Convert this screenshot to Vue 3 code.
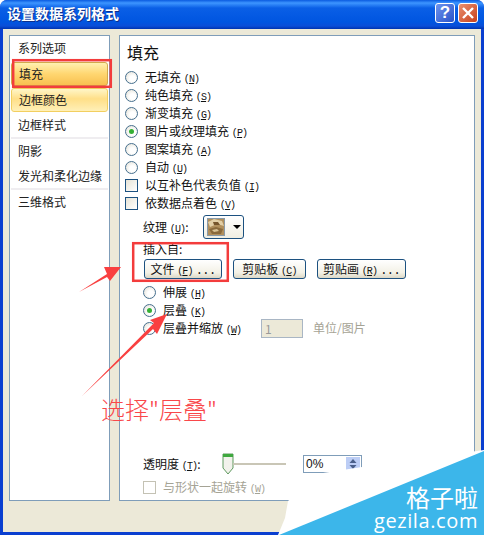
<template>
	<div class="win">
		<div class="titlebar">
			<span class="title">设置数据系列格式</span>
			<div class="capbtn help">?</div>
			<div class="capbtn close">
				<svg width="14" height="14" viewBox="0 0 14 14">
					<path d="M2 2 L12 12 M12 2 L2 12" stroke="#fff" stroke-width="2.4" />
				</svg>
			</div>
		</div>

		<div class="client">
			<div class="side">
				<template v-for="item in sideItems" :key="item.text">
					<div v-if="item.sep" class="sep"></div>
					<div class="side-item" :class="item.state">{{ item.text }}</div>
				</template>
			</div>

			<div class="main">
				<h2 class="heading">填充</h2>

				<div v-for="r in fillRadios" :key="r.text" class="row">
					<span class="radio" :class="{ on: r.on }"></span>
					<span class="label">{{ r.text }} <span class="key">(<u>{{ r.key }}</u>)</span></span>
				</div>
				<div v-for="c in checks" :key="c.text" class="row">
					<span class="check"></span>
					<span class="label">{{ c.text }} <span class="key">(<u>{{ c.key }}</u>)</span></span>
				</div>

				<div class="sub">
					<div class="texture-row">
						<span class="label tex-label">纹理 <span class="key">(<u>U</u>)</span>:</span>
						<div class="texture-pick">
							<svg width="18" height="18" viewBox="0 0 18 18">
								<rect width="18" height="18" fill="#b08f5c" />
								<path d="M1 4 L7 1 L15 3 L17 8 L10 6 L3 9Z" fill="#e2cfa6" />
								<path d="M2 11 L9 9 L16 11 L14 16 L5 16Z" fill="#8a6a3c" />
								<path d="M6 4 L11 4 L13 7 L7 7Z" fill="#75552c" />
								<path d="M5 12 L10 11 L12 13 L7 14Z" fill="#d8c294" />
								<rect x="0.5" y="0.5" width="17" height="17" fill="none" stroke="#8a9aa8" />
							</svg>
							<span class="caret"></span>
						</div>
					</div>
					<div class="insert-label">插入自:</div>
					<div class="btns">
						<button class="btn b1">文件 <span class="key">(<u>F</u>)</span><span class="dots">...</span></button>
						<button class="btn b2">剪贴板 <span class="key">(<u>C</u>)</span></button>
						<button class="btn b3">剪贴画 <span class="key">(<u>R</u>)</span><span class="dots">...</span></button>
					</div>
					<div class="tile-opts">
						<div class="row">
							<span class="radio"></span>
							<span class="label">伸展 <span class="key">(<u>H</u>)</span></span>
						</div>
						<div class="row">
							<span class="radio on"></span>
							<span class="label">层叠 <span class="key">(<u>K</u>)</span></span>
						</div>
						<div class="row">
							<span class="radio"></span>
							<span class="label zoom-label">层叠并缩放 <span class="key">(<u>W</u>)</span></span>
							<div class="num">1</div>
							<span class="label dim">单位/图片</span>
						</div>
					</div>
				</div>

				<div class="bottom">
					<div class="alpha-row">
						<span class="label">透明度 <span class="key">(<u>T</u>)</span>:</span>
						<div class="slider">
							<svg class="thumb" width="12" height="22" viewBox="0 0 12 22">
								<path d="M1 1 H11 V15 L6 21 L1 15Z" fill="#f2f2ec" stroke="#5f9a5f" />
								<path d="M1 1 H11 V4 H1Z" fill="#3fa83f" />
							</svg>
							<div class="track"></div>
						</div>
						<div class="percent">
							<span>0%</span>
							<div class="spin">
								<svg width="14" height="14" viewBox="0 0 14 14">
									<path d="M7 2 L10.5 6 H3.5Z M7 12 L10.5 8 H3.5Z" fill="#4a5f8a" />
								</svg>
							</div>
						</div>
					</div>
					<div class="row off">
						<span class="check dis"></span>
						<span class="label dim">与形状一起旋转 <span class="key">(<u>W</u>)</span></span>
					</div>
				</div>
			</div>
		</div>

		<!-- annotations pasted on top of the screenshot -->
		<svg class="marks" width="484" height="535" viewBox="0 0 484 535">
			<path d="M288 501 L285 518 L278 535 H484 V450 L362 467 L323 473Z" fill="#fff" />
			<path d="M279 535 L484 451 V535Z" fill="#3cb6ea" />
			<rect x="13.2" y="60.2" width="97.6" height="26.6" fill="none" stroke="#f33c3c" stroke-width="2.5" />
			<rect x="133.2" y="243.2" width="94.6" height="37.6" fill="none" stroke="#f33c3c" stroke-width="2.5" />
			<path d="M79 292 L107 274 L104 267 L121 267 L110 281 L107 277Z" fill="#f94040" />
			<path d="M82 396 L154 323 L150 320 L167 314 L157 334 L153 329Z" fill="#f94040" />
		</svg>
		<div class="note">选择"层叠"</div>
		<div class="brand">
			<div class="brand-cn">格子啦</div>
			<div class="brand-en">gezila.com</div>
		</div>
	</div>
</template>

<script setup>
const sideItems = [
	{ text: "系列选项" },
	{ text: "填充", state: "hot" },
	{ text: "边框颜色", state: "sel" },
	{ text: "边框样式" },
	{ text: "阴影", sep: true },
	{ text: "发光和柔化边缘" },
	{ text: "三维格式", sep: true },
];

const fillRadios = [
	{ text: "无填充", key: "N" },
	{ text: "纯色填充", key: "S" },
	{ text: "渐变填充", key: "G" },
	{ text: "图片或纹理填充", key: "P", on: true },
	{ text: "图案填充", key: "A" },
	{ text: "自动", key: "U" },
];

const checks = [
	{ text: "以互补色代表负值", key: "I" },
	{ text: "依数据点着色", key: "V" },
];
</script>

<style scoped>
.win {
	position: relative;
	width: 484px;
	height: 535px;
	overflow: hidden;
	display: flex;
	flex-direction: column;
	box-sizing: border-box;
	padding: 0 3px 3px;
	background: #0a3fd0;
	border-radius: 7px 7px 0 0;
	font-family: "Noto Sans CJK SC", "Liberation Sans", sans-serif;
	font-size: 12px;
	color: #111;
}

.titlebar {
	height: 29px;
	margin: 0 -3px;
	padding: 0 6px 4px 7px;
	box-sizing: border-box;
	display: flex;
	align-items: center;
	gap: 3px;
	background: linear-gradient(#0a5be0 0, #3d95ff 3px, #0a5fe6 8px, #0055e0 22px, #0a4ed8 26px, #0033b0 29px);
}
.title {
	flex: 1;
	color: #fff;
	font-size: 14px;
	font-weight: 700;
	line-height: 20px;
	text-shadow: 1px 1px 0 #0f2f8a;
}
.capbtn {
	width: 20px;
	height: 20px;
	box-sizing: border-box;
	border: 1px solid #fff;
	border-radius: 3px;
	display: flex;
	align-items: center;
	justify-content: center;
}
.help {
	background: linear-gradient(135deg, #6d94ee, #2a52c8);
	color: #fff;
	font: 700 17px "Liberation Sans", sans-serif;
}
.close {
	background: linear-gradient(135deg, #e9906f, #c8401c);
}

.client {
	flex: 1;
	display: flex;
	gap: 9px;
	padding: 6px 6px 31px;
	background: #ece9d8;
	min-height: 0;
}

.side {
	width: 101px;
	box-sizing: border-box;
	border: 1px solid #7f9db9;
	background: #fff;
	padding: 0 1px;
}
.side-item {
	height: 24px;
	line-height: 24px;
	padding-left: 7px;
	margin-bottom: 1px;
	white-space: nowrap;
	color: #222;
	box-sizing: border-box;
}
.side-item.hot,
.side-item.sel {
	margin-top: 2px;
	border-radius: 3px;
	line-height: 22px;
}
.side-item.hot {
	border: 1px solid #d2a94c;
	background: linear-gradient(#fff0b0, #ffd670 50%, #f8c050);
}
.side-item.sel {
	border: 1px solid #f2cf60;
	background: linear-gradient(#fff6c8, #ffdf88 45%, #fff0b8);
}
.sep {
	height: 2px;
	background: #efedf0;
	margin: -1px 0 0;
}

.main {
	flex: 1;
	min-width: 0;
	box-sizing: border-box;
	border: 1px solid #7f9db9;
	background: #fff;
	padding: 4px 5px 4px;
	display: flex;
	flex-direction: column;
}
.heading {
	margin: 0 0 4px 2px;
	font-size: 16px;
	line-height: 24px;
	font-weight: 400;
}

.row {
	height: 18px;
	display: flex;
	align-items: center;
	white-space: nowrap;
}
.label {
	line-height: 16px;
}
.row .label {
	margin-left: 7px;
}
.key {
	font: 10px "Liberation Mono", monospace;
	letter-spacing: -0.8px;
}
.dim {
	color: #a5a395;
}

.radio {
	width: 13px;
	height: 13px;
	flex: none;
	box-sizing: border-box;
	border: 1px solid #47708f;
	border-radius: 50%;
	background: radial-gradient(circle at 60% 60%, #fff 30%, #dfdcd0);
	display: flex;
	align-items: center;
	justify-content: center;
}
.radio.on::after {
	content: "";
	width: 5px;
	height: 5px;
	border-radius: 50%;
	background: #35b035;
}
.check {
	width: 13px;
	height: 13px;
	flex: none;
	box-sizing: border-box;
	border: 1px solid #1c5180;
	background: linear-gradient(135deg, #e6e3d6, #fff);
}
.check.dis {
	border-color: #c4c2b4;
	background: #fff;
}

.sub {
	padding-left: 18px;
}
.texture-row {
	height: 24px;
	margin-top: 3px;
	display: flex;
	align-items: center;
}
.tex-label {
	width: 60px;
	white-space: nowrap;
}
.texture-pick {
	width: 41px;
	height: 24px;
	box-sizing: border-box;
	border: 1px solid #1c5180;
	border-radius: 3px;
	background: linear-gradient(#fff, #f0eee2);
	display: flex;
	align-items: center;
	padding-left: 3px;
	gap: 8px;
}
.caret {
	width: 0;
	height: 0;
	border-left: 4px solid transparent;
	border-right: 4px solid transparent;
	border-top: 4px solid #000;
}
.insert-label {
	height: 20px;
	line-height: 20px;
}
.btns {
	display: flex;
	gap: 11px;
	margin-left: 1px;
}
.btn {
	height: 20px;
	padding: 0;
	box-sizing: border-box;
	border: 1px solid #1c5180;
	border-radius: 3px;
	background: linear-gradient(#fff, #f3f1e6 70%, #dcd8c6);
	font: inherit;
	color: inherit;
	line-height: 18px;
	white-space: nowrap;
}
.dots {
	font: 12px "Liberation Mono", monospace;
	letter-spacing: -0.6px;
	margin-left: 3px;
}
.b1 { width: 78px; }
.b2 { width: 73px; }
.b3 { width: 89px; }

.tile-opts {
	margin-top: 4px;
}
.row .zoom-label {
	width: 98px;
	margin-left: 7px;
	flex: none;
}
.num {
	width: 42px;
	height: 19px;
	box-sizing: border-box;
	padding-left: 3px;
	border: 1px solid #a9b6c4;
	background: #ece9d8;
	color: #999;
	line-height: 17px;
}
.row .num + .label {
	margin-left: 10px;
}

.bottom {
	margin-top: auto;
	padding-left: 18px;
}
.alpha-row {
	height: 22px;
	margin-bottom: 3px;
	display: flex;
	align-items: center;
}
.alpha-row .label {
	width: 79px;
	white-space: nowrap;
}
.slider {
	width: 64px;
	height: 22px;
	display: flex;
	align-items: center;
}
.thumb {
	flex: none;
}
.track {
	flex: 1;
	height: 2px;
	margin-left: -1px;
	background: #c9c6b6;
}
.percent {
	width: 59px;
	height: 18px;
	margin-left: 17px;
	box-sizing: border-box;
	border: 1px solid #7f9db9;
	padding: 0 1px 0 2px;
	display: flex;
	align-items: center;
	justify-content: space-between;
	font-family: "Liberation Sans", sans-serif;
	background: #fff;
}
.spin {
	width: 14px;
	height: 14px;
	background: #bccdf5;
}
.spin svg {
	display: block;
}

.marks {
	position: absolute;
	left: 0;
	top: 0;
	pointer-events: none;
}
.note {
	position: absolute;
	left: 101px;
	top: 393px;
	font-size: 24px;
	line-height: 32px;
	color: #f9474a;
	white-space: nowrap;
	font-weight: 300;
}
.brand {
	position: absolute;
	right: 6px;
	bottom: 2px;
	color: #fff;
	text-align: right;
	white-space: nowrap;
}
.brand-cn {
	font-size: 24px;
	line-height: 24px;
}
.brand-en {
	font-family: "Open Sans", sans-serif;
	font-size: 20px;
	line-height: 24px;
	letter-spacing: 0.6px;
}
</style>
